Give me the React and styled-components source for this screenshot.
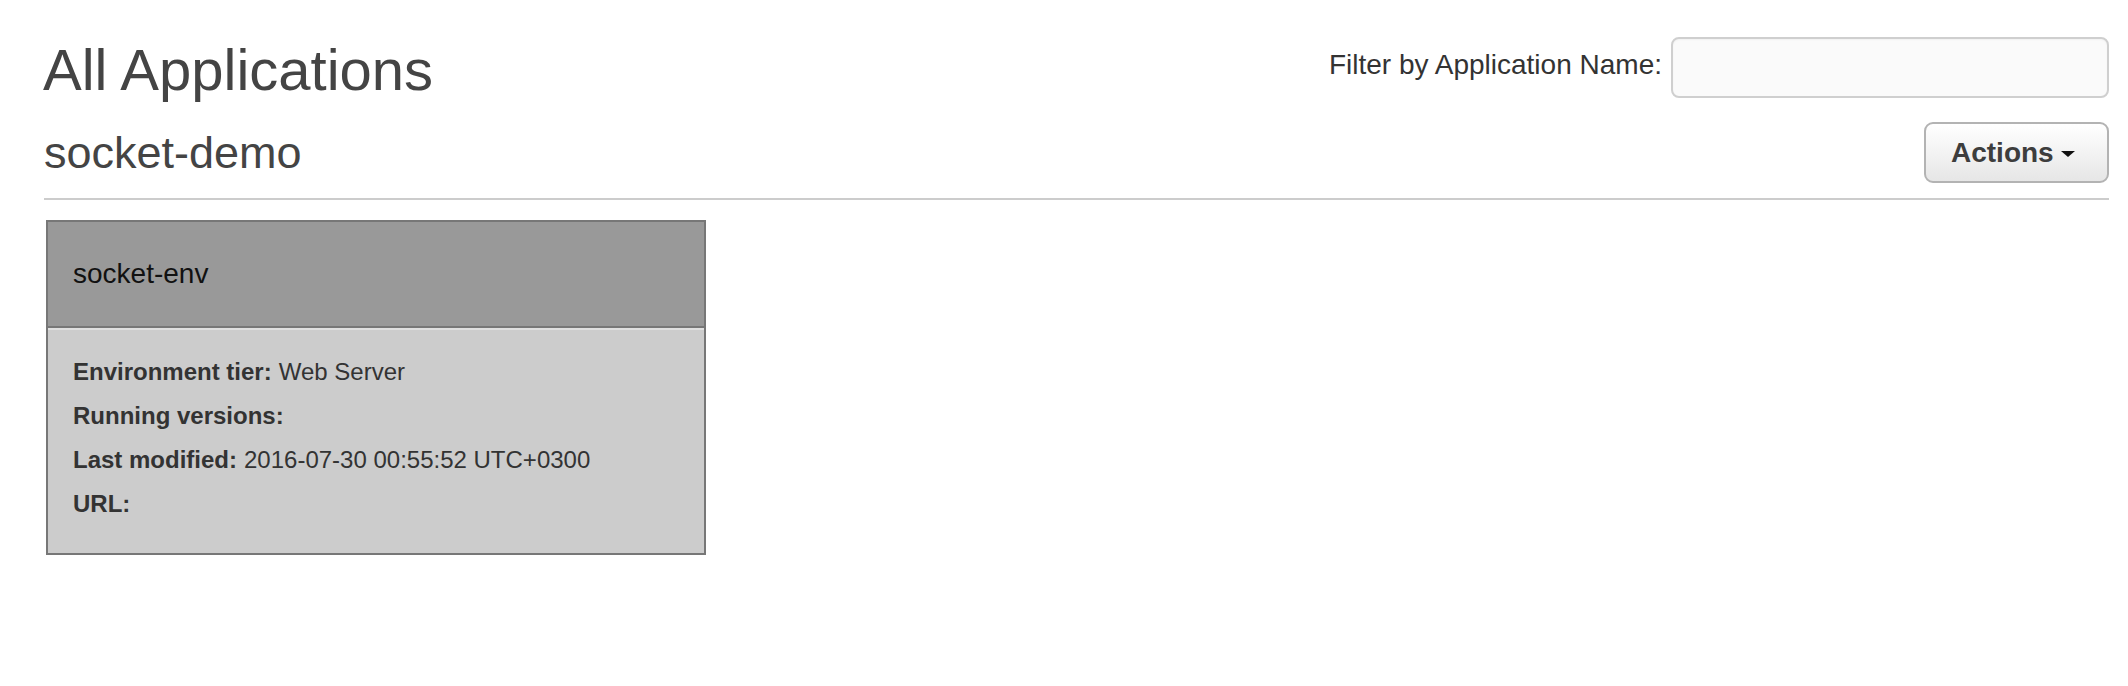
import styled, { createGlobalStyle } from "styled-components";

const GlobalStyle = createGlobalStyle`
  body {
    margin: 0;
    background: #fff;
    font-family: "Liberation Sans", Arial, Helvetica, sans-serif;
    color: #333;
  }
`;

const envDetails = [
  { label: "Environment tier:", value: "Web Server" },
  { label: "Running versions:", value: "" },
  { label: "Last modified:", value: "2016-07-30 00:55:52 UTC+0300" },
  { label: "URL:", value: "" },
];

const App = () => {
  return <Page>
    <GlobalStyle />
    <TopBar>
      <Title>All Applications</Title>
      <Filter>
        <FilterLabel htmlFor="app-filter">Filter by Application Name:</FilterLabel>
        <FilterInput id="app-filter" type="text" />
      </Filter>
    </TopBar>

    <AppHeader>
      <AppName>socket-demo</AppName>
      <ActionsButton>
        Actions
        <Caret />
      </ActionsButton>
    </AppHeader>

    <EnvCard>
      <EnvTitle>socket-env</EnvTitle>
      <EnvBody>
        {envDetails.map((row) => (
          <DetailRow key={row.label}>
            <DetailLabel>{row.label}</DetailLabel>
            {row.value && <DetailValue>{row.value}</DetailValue>}
          </DetailRow>
        ))}
      </EnvBody>
    </EnvCard>
  </Page>
}

const Page = styled.div`
  padding: 37px 19px 0 44px;
`;

const TopBar = styled.div`
  display: flex;
  justify-content: space-between;
  align-items: flex-start;
`;

const Title = styled.h1`
  margin: 0 0 0 -1px;
  font-size: 58px;
  line-height: 65px;
  font-weight: normal;
  color: #444;
`;

const Filter = styled.div`
  display: flex;
  align-items: flex-start;
  gap: 9px;
`;

const FilterLabel = styled.label`
  margin-top: 12px;
  font-size: 28px;
  line-height: 32px;
  color: #333;
`;

const FilterInput = styled.input`
  box-sizing: border-box;
  width: 438px;
  height: 61px;
  border: 2px solid #cfcfcf;
  border-radius: 8px;
  background: #fafafa;
  box-shadow: inset 0 1px 2px rgba(0, 0, 0, 0.04);
  outline: none;
`;

const AppHeader = styled.div`
  margin-top: 20px;
  padding-bottom: 15px;
  border-bottom: 2px solid #cccccc;
  display: flex;
  justify-content: space-between;
  align-items: center;
`;

const AppName = styled.h2`
  margin: 0;
  font-size: 45px;
  line-height: 50px;
  font-weight: normal;
  color: #444;
`;

const ActionsButton = styled.button`
  box-sizing: border-box;
  height: 61px;
  width: 185px;
  padding: 0 0 0 25px;
  display: flex;
  align-items: center;
  gap: 7px;
  border: 2px solid #b3b3b3;
  border-radius: 9px;
  background: linear-gradient(to bottom, #ffffff 0%, #f3f3f3 50%, #e6e6e6 100%);
  font-family: "Liberation Sans", Arial, sans-serif;
  font-size: 28px;
  font-weight: bold;
  color: #3d3d3d;
  cursor: pointer;
`;

const Caret = styled.span`
  width: 0;
  height: 0;
  border-left: 7.5px solid transparent;
  border-right: 7.5px solid transparent;
  border-top: 6px solid #111;
  margin-top: 2px;
`;

const EnvCard = styled.div`
  box-sizing: border-box;
  width: 660px;
  margin: 20px 0 0 2px;
  border: 2px solid #777;
  background: #cccccc;
`;

const EnvTitle = styled.div`
  height: 104px;
  padding: 0 25px;
  display: flex;
  align-items: center;
  background: #999999;
  border-bottom: 2px solid #777;
  font-size: 28px;
  line-height: 32px;
  color: #111;
`;

const EnvBody = styled.div`
  padding: 20px 25px 27px;
  border-top: 2px solid #e0e0e0;
`;

const DetailRow = styled.div`
  display: flex;
  font-size: 24px;
  line-height: 44px;
  color: #333;
`;

const DetailLabel = styled.span`
  font-weight: bold;
  margin-right: 7px;
`;

const DetailValue = styled.span`
  color: #333;
`;

export default App
